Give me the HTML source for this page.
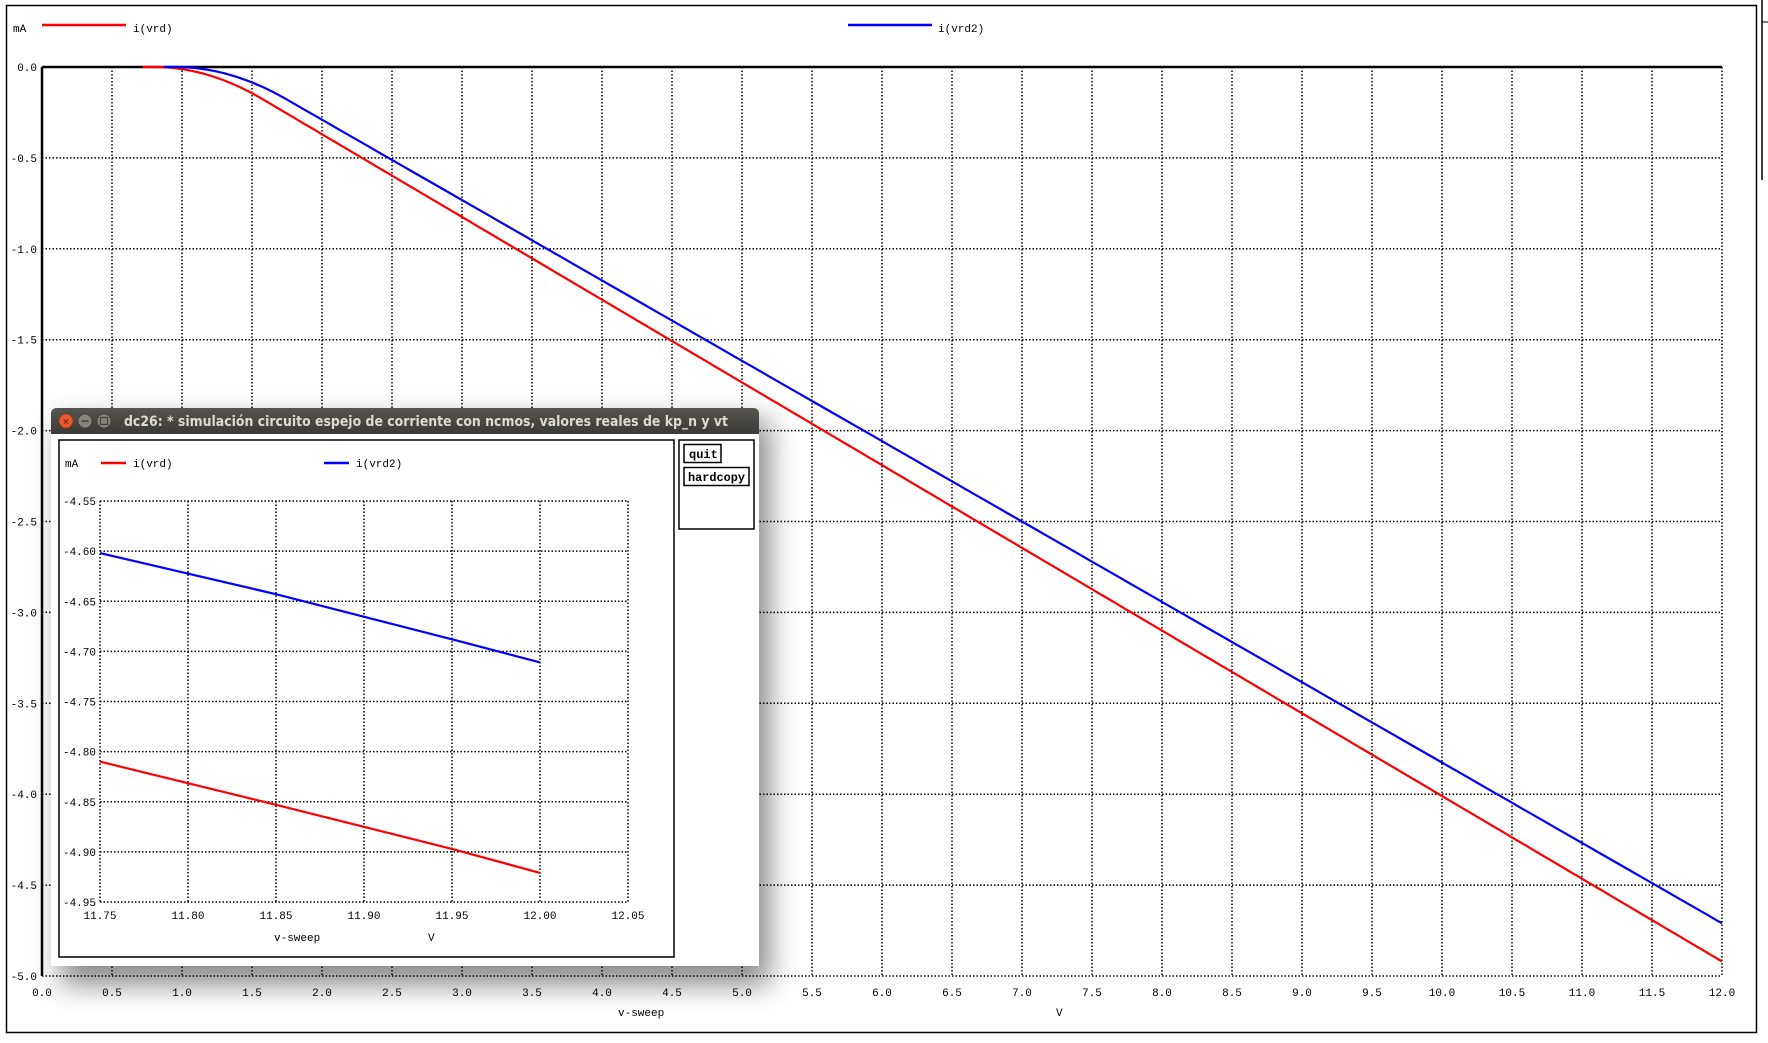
<!DOCTYPE html>
<html><head><meta charset="utf-8"><style>
html,body{margin:0;padding:0;background:#fff;}
body{width:1768px;height:1043px;position:relative;overflow:hidden;font-family:"Liberation Mono","DejaVu Sans Mono",monospace;}
svg{position:absolute;left:0;top:0;}
</style></head><body>
<svg id="s" width="1768" height="1043" xmlns="http://www.w3.org/2000/svg">
<defs>
<filter id="sh" x="-20%" y="-20%" width="140%" height="140%"><feGaussianBlur stdDeviation="14"/></filter>
<linearGradient id="tb" x1="0" y1="0" x2="0" y2="1"><stop offset="0" stop-color="#57554f"/><stop offset="1" stop-color="#3c3b37"/></linearGradient>
</defs>
<g id="main"></g>
<rect x="60" y="420" width="710" height="565" fill="#000" opacity="0.45" filter="url(#sh)"/>
<g id="win"></g>
</svg>
<script>
var NS="http://www.w3.org/2000/svg";
function el(p,t,a,txt){var e=document.createElementNS(NS,t);for(var k in a)e.setAttribute(k,a[k]);if(txt!==undefined)e.textContent=txt;p.appendChild(e);return e;}
var m=document.getElementById('main');
el(m,'rect',{x:6.5,y:5.5,width:1750,height:1027,fill:'none',stroke:'#000','stroke-width':1.5});
el(m,'line',{x1:1762,y1:0,x2:1762,y2:180,stroke:'#000','stroke-width':1.5});
el(m,'line',{x1:1762,y1:22,x2:1768,y2:22,stroke:'#000','stroke-width':1});
var L=42,T=67,R=1722,B=976;
var fs={'font-size':'11px','font-family':'"Liberation Mono","DejaVu Sans Mono",monospace',fill:'#000'};
function tx(p,x,y,s,anchor){var a=Object.assign({x:x,y:y,'text-anchor':anchor||'start'},fs);return el(p,'text',a,s);}
tx(m,13,32,'mA');
el(m,'line',{x1:42,y1:25,x2:126,y2:25,stroke:'#f00','stroke-width':2.5});
tx(m,133,32,'i(vrd)');
el(m,'line',{x1:848,y1:25,x2:932,y2:25,stroke:'#00f','stroke-width':2.5});
tx(m,938,32,'i(vrd2)');
for(var k=1;k<=24;k++){var x=L+70*k;el(m,'line',{x1:x,y1:T,x2:x,y2:B,stroke:'#000','stroke-width':1.5,'stroke-dasharray':'1.5,2'});}
for(var j=1;j<=10;j++){var y=T+90.9*j;el(m,'line',{x1:L,y1:y,x2:R,y2:y,stroke:'#000','stroke-width':1.5,'stroke-dasharray':'1.5,2'});}
el(m,'line',{x1:L,y1:T,x2:R,y2:T,stroke:'#000','stroke-width':2.5});
el(m,'line',{x1:L,y1:T,x2:L,y2:B,stroke:'#000','stroke-width':2.5});
for(var k=0;k<=24;k++){tx(m,L+70*k,996,(k*0.5).toFixed(1),'middle');}
for(var j=0;j<=10;j++){tx(m,37,T+90.9*j+4,(j===0?'0.0':'-'+(j*0.5).toFixed(1)),'end');}
tx(m,618,1016,'v-sweep');tx(m,1056,1016,'V');
function X(v){return L+v*140;}function Y(i){return T-i*181.8;}
function pl(p,pts,c,fx,fy){var s=pts.map(function(q){return fx(q[0]).toFixed(1)+','+fy(q[1]).toFixed(1);}).join(' ');el(p,'polyline',{points:s,fill:'none',stroke:c,'stroke-width':2.2,'stroke-linejoin':'round'});}
function curve(v0,iEnd,s){
  var vk=24-2*iEnd/s-v0;
  var a=s/(2*(vk-v0));var pts=[[v0-0.08,0]];
  for(var v=v0;v<=12.001;v+=0.05){var i;if(v<=vk)i=-a*(v-v0)*(v-v0);else i=-iEnd+s*(12-v);pts.push([v,i]);}
  return pts;}
pl(m,curve(0.8,4.92,0.455),'#f00',X,Y);
pl(m,curve(0.95,4.71,0.442),'#00f',X,Y);
var w=document.getElementById('win');
el(w,'rect',{x:51,y:434,width:708,height:532,fill:'#fff'});
el(w,'path',{d:'M51,434 L51,414 Q51,408 57,408 L753,408 Q759,408 759,414 L759,434 Z',fill:'url(#tb)'});
el(w,'circle',{cx:66,cy:421,r:7,fill:'#e8582d',stroke:'#8a3a1e','stroke-width':0.8});
el(w,'text',{x:66,y:424.5,'text-anchor':'middle','font-size':'9px','font-family':'DejaVu Sans',fill:'#5a2010'},'×');
el(w,'circle',{cx:85,cy:421,r:7,fill:'#86847c',stroke:'#3a3934','stroke-width':0.8});
el(w,'rect',{x:81.5,y:420.3,width:7,height:1.6,fill:'#444'});
el(w,'circle',{cx:104,cy:421,r:7,fill:'#86847c',stroke:'#3a3934','stroke-width':0.8});
el(w,'rect',{x:100.5,y:417.5,width:7,height:7,fill:'none',stroke:'#444','stroke-width':1.2});
el(w,'text',{x:124,y:426,'font-size':'14.5px','font-weight':'bold','font-family':'"DejaVu Sans","Liberation Sans",sans-serif',fill:'#dfdbd2',textLength:604,lengthAdjust:'spacingAndGlyphs'},'dc26: * simulación circuito espejo de corriente con ncmos, valores reales de kp_n y vt');
el(w,'rect',{x:59,y:440,width:615,height:517,fill:'none',stroke:'#000','stroke-width':1.5});
el(w,'rect',{x:679,y:440,width:75,height:89,fill:'none',stroke:'#000','stroke-width':1.5});
el(w,'rect',{x:684,y:444.5,width:37,height:18,fill:'none',stroke:'#000','stroke-width':1.5});
el(w,'text',{x:689,y:458,'font-size':'12px','font-weight':'bold','font-family':'"Liberation Mono",monospace'},'quit');
el(w,'rect',{x:684,y:467.5,width:65,height:18,fill:'none',stroke:'#000','stroke-width':1.5});
el(w,'text',{x:688,y:481,'font-size':'12px','font-weight':'bold','font-family':'"Liberation Mono",monospace',textLength:57,lengthAdjust:'spacingAndGlyphs'},'hardcopy');
tx(w,65,467,'mA');
el(w,'line',{x1:101,y1:463,x2:126,y2:463,stroke:'#f00','stroke-width':2.5});
tx(w,133,467,'i(vrd)');
el(w,'line',{x1:324,y1:463,x2:349,y2:463,stroke:'#00f','stroke-width':2.5});
tx(w,356,467,'i(vrd2)');
var iL=100,iT=501,iR=628,iB=902,dx=(iR-iL)/6,dy=(iB-iT)/8;
for(var k=0;k<=6;k++){el(w,'line',{x1:iL+dx*k,y1:iT,x2:iL+dx*k,y2:iB,stroke:'#000','stroke-width':1.5,'stroke-dasharray':'1.5,2'});tx(w,iL+dx*k,919,(11.75+0.05*k).toFixed(2),'middle');}
for(var j=0;j<=8;j++){el(w,'line',{x1:iL,y1:iT+dy*j,x2:iR,y2:iT+dy*j,stroke:'#000','stroke-width':1.5,'stroke-dasharray':'1.5,2'});tx(w,96,iT+dy*j+4,(-4.55-0.05*j).toFixed(2),'end');}
tx(w,274,941,'v-sweep');tx(w,428,941,'V');
function IX(v){return iL+(v-11.75)/0.05*dx;}function IY(i){return iT+(-4.55-i)/0.05*dy;}
pl(w,[[11.75,-4.81],[11.85,-4.853],[11.95,-4.897],[12,-4.921]],'#f00',IX,IY);
pl(w,[[11.75,-4.602],[11.85,-4.643],[11.95,-4.688],[12,-4.711]],'#00f',IX,IY);
</script>
</body></html>
